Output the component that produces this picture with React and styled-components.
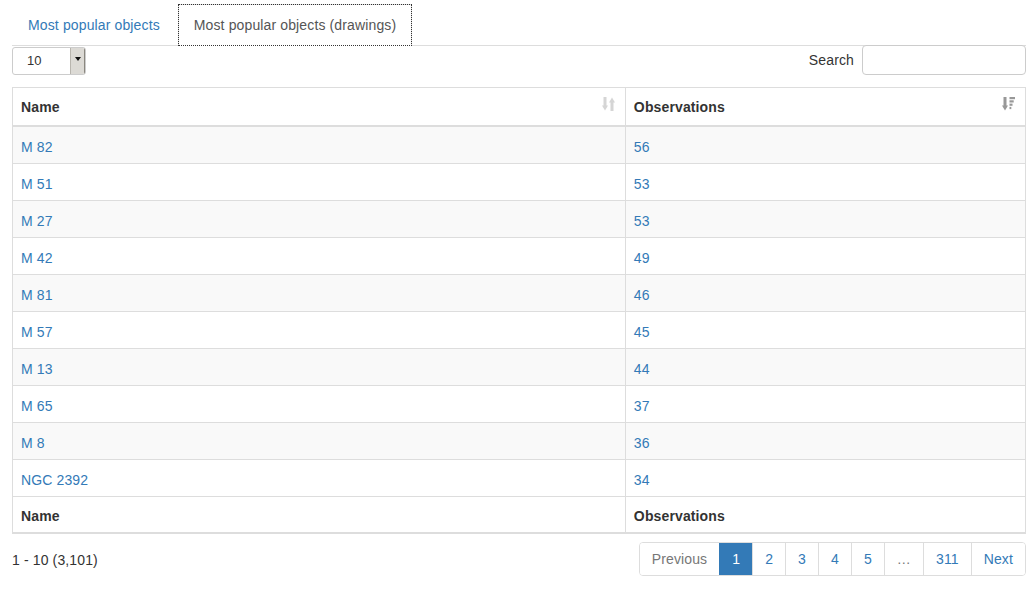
import React from 'react';
import styled, { createGlobalStyle } from 'styled-components';

const rows = [
  ['M 82', 56],
  ['M 51', 53],
  ['M 27', 53],
  ['M 42', 49],
  ['M 81', 46],
  ['M 57', 45],
  ['M 13', 44],
  ['M 65', 37],
  ['M 8', 36],
  ['NGC 2392', 34],
];

const pages = ['Previous', '1', '2', '3', '4', '5', '…', '311', 'Next'];

function SortBoth() {
  return (
    <SortIcon viewBox="0 0 13 14" $opacity={0.2}>
      <path d="M1.5 0h3v8.5H6L3 13.5 0 8.5h1.5z" fill="#333" />
      <path d="M8.5 14h3V5.5H13L10 0.5 7 5.5h1.5z" fill="#333" />
    </SortIcon>
  );
}

function SortDesc() {
  return (
    <SortIcon viewBox="0 0 13 14" $opacity={0.5}>
      <path d="M1.5 0h3v8.5H6L3 13.5 0 8.5h1.5z" fill="#333" />
      <rect x="7.5" y="0" width="5.5" height="2.2" fill="#333" />
      <rect x="7.5" y="3.3" width="4.2" height="2.2" fill="#333" />
      <rect x="7.5" y="6.6" width="3" height="2.2" fill="#333" />
      <rect x="7.5" y="9.9" width="1.8" height="2.2" fill="#333" />
    </SortIcon>
  );
}

export default function App() {
  return (
    <Page>
      <GlobalStyle />
      <Tabs>
        <Tab>Most popular objects</Tab>
        <Tab $active>Most popular objects (drawings)</Tab>
      </Tabs>
      <Toolbar>
        <LengthSelect>
          <SelectValue>10</SelectValue>
          <SelectButton>
            <Caret />
          </SelectButton>
        </LengthSelect>
        <SearchLabel>
          Search
          <SearchInput type="text" />
        </SearchLabel>
      </Toolbar>
      <Table>
        <colgroup>
          <col style={{ width: '60.5%' }} />
          <col />
        </colgroup>
        <thead>
          <tr>
            <HeadCell>
              Name
              <SortBoth />
            </HeadCell>
            <HeadCell>
              Observations
              <SortDesc />
            </HeadCell>
          </tr>
        </thead>
        <tbody>
          {rows.map(([name, count], i) => (
            <Row key={name} $odd={i % 2 === 0}>
              <Cell>
                <Link href="#">{name}</Link>
              </Cell>
              <Cell>
                <Link href="#">{count}</Link>
              </Cell>
            </Row>
          ))}
        </tbody>
        <tfoot>
          <tr>
            <FootCell>Name</FootCell>
            <FootCell>Observations</FootCell>
          </tr>
        </tfoot>
      </Table>
      <Bottom>
        <Info>1 - 10 (3,101)</Info>
        <Pagination>
          {pages.map((p) => (
            <PageItem
              key={p}
              $active={p === '1'}
              $disabled={p === 'Previous' || p === '…'}
            >
              {p}
            </PageItem>
          ))}
        </Pagination>
      </Bottom>
    </Page>
  );
}

const GlobalStyle = createGlobalStyle`
  body {
    margin: 0;
    background: #fff;
    font-family: "Liberation Sans", Arial, sans-serif;
    font-size: 14px;
    line-height: 20px;
    letter-spacing: 0.13px;
    color: #333;
  }
`;

const Page = styled.div`
  padding: 4px 7px 0 12px;
`;

const Tabs = styled.div`
  display: flex;
  border-bottom: 1px solid #ddd;
  height: 41px;
`;

const Tab = styled.div`
  padding: 10px 15px;
  margin-right: 2px;
  margin-bottom: -1px;
  border: 1px solid transparent;
  color: #337ab7;
  ${(p) =>
    p.$active &&
    `
    color: #555;
    background: #fff;
    border-color: #ddd;
    border-bottom-color: #fff;
    outline: 1px dotted #333;
    outline-offset: -1px;
  `}
`;

const Toolbar = styled.div`
  display: flex;
  justify-content: space-between;
  align-items: center;
  height: 30px;
  margin-top: -1px;
`;

const LengthSelect = styled.div`
  display: flex;
  width: 74px;
  height: 28px;
  margin-top: 2px;
  border: 1px solid #ccc;
  border-radius: 3px;
  box-sizing: border-box;
  background: #fff;
  overflow: hidden;
`;

const SelectValue = styled.div`
  flex: 1;
  padding-left: 14px;
  font-size: 13px;
  line-height: 26px;
  letter-spacing: 0;
`;

const SelectButton = styled.div`
  width: 15px;
  background: #dcdad5;
  border-left: 1px solid #b8b5ae;
  border-right: 1px solid #8a877f;
  display: flex;
  justify-content: center;
  padding-top: 9px;
  box-sizing: border-box;
`;

const Caret = styled.div`
  width: 0;
  height: 0;
  border-left: 3px solid transparent;
  border-right: 3px solid transparent;
  border-top: 4px solid #111;
`;

const SearchLabel = styled.label`
  display: flex;
  align-items: center;
  gap: 8px;
`;

const SearchInput = styled.input`
  width: 164px;
  height: 30px;
  box-sizing: border-box;
  border: 1px solid #ccc;
  border-radius: 4px;
  padding: 5px 10px;
  font: inherit;
  margin: 0;
`;

const Table = styled.table`
  width: 100%;
  table-layout: fixed;
  margin-top: 12px;
  border-collapse: collapse;
  border: 1px solid #ddd;
  font-size: 14px;
`;

const HeadCell = styled.th`
  position: relative;
  text-align: left;
  padding: 9px 30px 8px 8px;
  border: 1px solid #ddd;
  border-bottom: 2px solid #ddd;
  font-weight: bold;
  line-height: 20px;
`;

const SortIcon = styled.svg`
  position: absolute;
  right: 10px;
  top: 9px;
  width: 13px;
  height: 14px;
  opacity: ${(p) => p.$opacity};
`;

const Row = styled.tr`
  background: ${(p) => (p.$odd ? '#f9f9f9' : '#fff')};
`;

const Cell = styled.td`
  padding: 10px 8px 6px;
  border: 1px solid #ddd;
  line-height: 20px;
`;

const FootCell = styled.th`
  text-align: left;
  padding: 9px 8px 6px;
  border: 1px solid #ddd;
  border-bottom: 2px solid #ddd;
  font-weight: bold;
  line-height: 20px;
`;

const Link = styled.a`
  color: #337ab7;
  text-decoration: none;
`;

const Bottom = styled.div`
  display: flex;
  justify-content: space-between;
  align-items: center;
  margin-top: 8px;
`;

const Info = styled.div`
  padding-top: 1px;
`;

const Pagination = styled.div`
  display: flex;
  border: 1px solid #ddd;
  border-radius: 4px;
  overflow: hidden;
`;

const PageItem = styled.div`
  padding: 6px 12px;
  line-height: 20px;
  border-left: 1px solid #ddd;
  color: ${(p) => (p.$active ? '#fff' : p.$disabled ? '#777' : '#337ab7')};
  background: ${(p) => (p.$active ? '#337ab7' : '#fff')};
  ${(p) => p.$active && 'border-left-color: #337ab7;'}
  &:first-child {
    border-left: none;
  }
`;
